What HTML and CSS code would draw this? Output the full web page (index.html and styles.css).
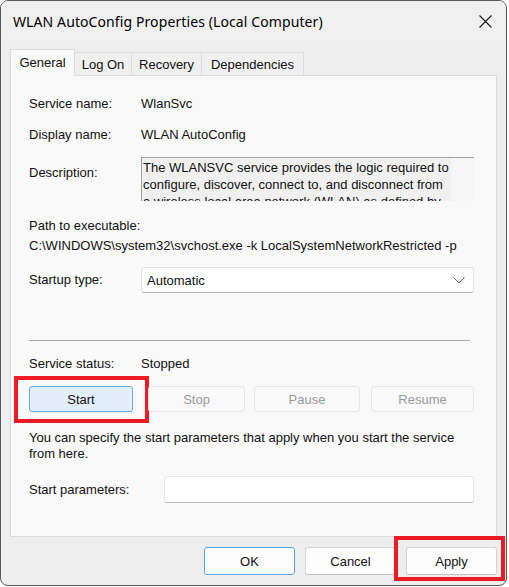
FILE: index.html
```html
<!DOCTYPE html>
<html lang="en">
<head>
<meta charset="utf-8">
<title>WLAN AutoConfig Properties (Local Computer)</title>
<link rel="stylesheet" href="styles.css">
</head>
<body>
<div class="window">
  <div class="titlebar">
    <span class="title">WLAN AutoConfig Properties (Local Computer)</span>
    <svg class="close" width="13" height="13" viewBox="0 0 13 13"><path d="M0.5 0.5 L12.5 12.5 M12.5 0.5 L0.5 12.5" stroke="#1a1a1a" stroke-width="1.1" fill="none"/></svg>
  </div>
  <div class="content">
    <div class="tabs">
      <div class="tab active tab-general">General</div>
      <div class="tab tab-logon">Log On</div>
      <div class="tab tab-recovery">Recovery</div>
      <div class="tab tab-deps">Dependencies</div>
    </div>
    <div class="panel">
      <div class="row first">
        <span class="label">Service name:</span>
        <span class="value">WlanSvc</span>
      </div>
      <div class="row second">
        <span class="label">Display name:</span>
        <span class="value">WLAN AutoConfig</span>
      </div>
      <div class="row desc-row">
        <span class="label desc-label">Description:</span>
        <div class="desc-box">
          <div class="desc-text">The WLANSVC service provides the logic required to configure, discover, connect to, and disconnect from a wireless local area network (WLAN) as defined by IEEE 802.11 standards.</div>
          <div class="desc-scroll"></div>
        </div>
      </div>
      <div class="path-label">Path to executable:</div>
      <div class="path">C:\WINDOWS\system32\svchost.exe -k LocalSystemNetworkRestricted -p</div>
      <div class="row startup-row">
        <span class="label">Startup type:</span>
        <div class="combo">
          <span>Automatic</span>
          <svg width="12" height="7" viewBox="0 0 12 7"><path d="M0.5 0.5 L6 6 L11.5 0.5" stroke="#606060" stroke-width="1" fill="none"/></svg>
        </div>
      </div>
      <div class="separator"></div>
      <div class="row status-row">
        <span class="label">Service status:</span>
        <span class="value">Stopped</span>
      </div>
      <div class="btn-row">
        <button class="btn btn-start">Start<span class="highlight hl-start"></span></button>
        <button class="btn disabled btn-stop">Stop</button>
        <button class="btn disabled btn-pause">Pause</button>
        <button class="btn disabled btn-resume">Resume</button>
      </div>
      <p class="hint">You can specify the start parameters that apply when you start the service from here.</p>
      <div class="row params-row">
        <span class="label params-label">Start parameters:</span>
        <div class="input"></div>
      </div>
    </div>
    <div class="footer">
      <button class="btn dlg default">OK</button>
      <button class="btn dlg">Cancel</button>
      <button class="btn dlg btn-apply">Apply<span class="highlight hl-apply"></span></button>
    </div>
  </div>
</div>
</body>
</html>
```
FILE: styles.css
```css
html, body {
  margin: 0;
  padding: 0;
  background: #ffffff;
}
body {
  font-family: "Liberation Sans", Arial, sans-serif;
  font-size: 13px;
  color: #111;
}
.window {
  width: 507px;
  height: 586px;
  box-sizing: border-box;
  border: 1px solid #595959;
  border-radius: 8px;
  background: #eeeeee;
  overflow: hidden;
  display: flex;
  flex-direction: column;
}
.titlebar {
  height: 39px;
  flex: none;
  background: #f0f0f0;
  display: flex;
  align-items: center;
  justify-content: space-between;
  padding-left: 12px;
  padding-right: 14px;
}
.title {
  font-family: "Noto Sans", "Open Sans", sans-serif;
  font-size: 14px;
  letter-spacing: 0.1px;
  color: #000;
  padding-top: 1px;
}
.close {
  display: block;
  margin-top: 2px;
}
.content {
  padding: 9px 9px 0 9px;
  display: flex;
  flex-direction: column;
}
.tabs {
  display: flex;
  align-items: flex-end;
  height: 26px;
  position: relative;
  z-index: 1;
}
.tab {
  box-sizing: border-box;
  height: 23px;
  border: 1px solid #dcdcdc;
  border-bottom: none;
  border-left: none;
  background: #f0f0f0;
  text-align: center;
  line-height: 23px;
  color: #111;
}
.tab.active {
  height: 27px;
  margin-bottom: -1px;
  background: #f9f9f9;
  border-left: 1px solid #dcdcdc;
  line-height: 25px;
}
.tab-general { width: 65px; }
.tab-logon { width: 57px; }
.tab-recovery { width: 70px; }
.tab-deps { width: 102px; }

.panel {
  box-sizing: border-box;
  height: 462px;
  background: #f9f9f9;
  border: 1px solid #dcdcdc;
  padding: 0 22px 0 18px;
  display: flex;
  flex-direction: column;
}
.row {
  display: flex;
  align-items: center;
  line-height: 16px;
}
.label {
  width: 112px;
  flex: none;
}
.first { margin-top: 20px; }
.second { margin-top: 15px; }
.desc-row {
  margin-top: 14px;
  align-items: flex-start;
}
.desc-label { margin-top: 8px; }
.desc-box {
  flex: 1;
  height: 44px;
  box-sizing: border-box;
  border-top: 1px solid #a0a0a0;
  border-left: 1px solid #a0a0a0;
  background: #f0f0f0;
  display: flex;
  overflow: hidden;
}
.desc-text {
  flex: 1;
  padding-left: 1px;
  padding-top: 1px;
  line-height: 17px;
}
.desc-scroll {
  width: 23px;
  flex: none;
  background: #f6f6f6;
}
.path-label {
  margin-top: 17px;
  line-height: 16px;
}
.path {
  margin-top: 4px;
  line-height: 16px;
  white-space: nowrap;
}
.startup-row { margin-top: 13px; }
.combo {
  flex: 1;
  height: 26px;
  box-sizing: border-box;
  background: #fefefe;
  border: 1px solid #e3e3e3;
  border-bottom-color: #b8b8b8;
  border-radius: 3px;
  display: flex;
  align-items: center;
  justify-content: space-between;
  padding: 1px 8px 0 5px;
}
.combo svg { display: block; }
.separator {
  margin-top: 47px;
  margin-right: 4px;
  height: 1px;
  background: #a9a9a9;
}
.status-row { margin-top: 15px; }
.btn-row {
  margin-top: 14px;
  display: flex;
}
.btn {
  font-family: "Liberation Sans", Arial, sans-serif;
  font-size: 13px;
  color: #111;
  box-sizing: border-box;
  height: 26px;
  padding: 1px 0 0 0;
  margin: 0;
  background: #fdfdfd;
  border: 1px solid #d4d4d4;
  border-bottom-color: #c2c2c2;
  border-radius: 3px;
  position: relative;
}
.btn-start {
  width: 104px;
  background: #e2eef9;
  border: 1px solid #69a9e4;
}
.disabled {
  background: #f9f9f9;
  border: 1px solid #e6e6e6;
  color: #9a9a9a;
}
.btn-stop { width: 97px; margin-left: 15px; }
.btn-pause { width: 106px; margin-left: 9px; }
.btn-resume { width: 103px; margin-left: 11px; }
.hint {
  margin: 18px 0 0 0;
  line-height: 16px;
}
.params-row { margin-top: 14px; }
.params-label { width: 135px; padding-top: 1px; }
.input {
  flex: 1;
  height: 27px;
  box-sizing: border-box;
  background: #ffffff;
  border: 1px solid #e6e6e6;
  border-bottom-color: #bdbdbd;
  border-radius: 3px;
}
.footer {
  margin-top: 10px;
  display: flex;
  justify-content: flex-end;
  gap: 10px;
}
.dlg {
  width: 91px;
  height: 28px;
}
.default {
  border: 1px solid #5c9fe0;
}
.highlight {
  position: absolute;
  box-sizing: border-box;
  border: 4px solid #ed1c24;
  pointer-events: none;
}
.hl-start {
  left: -16px;
  top: -11px;
  width: 135px;
  height: 47px;
}
.hl-apply {
  left: -13px;
  top: -12px;
  width: 111px;
  height: 45px;
}
```
